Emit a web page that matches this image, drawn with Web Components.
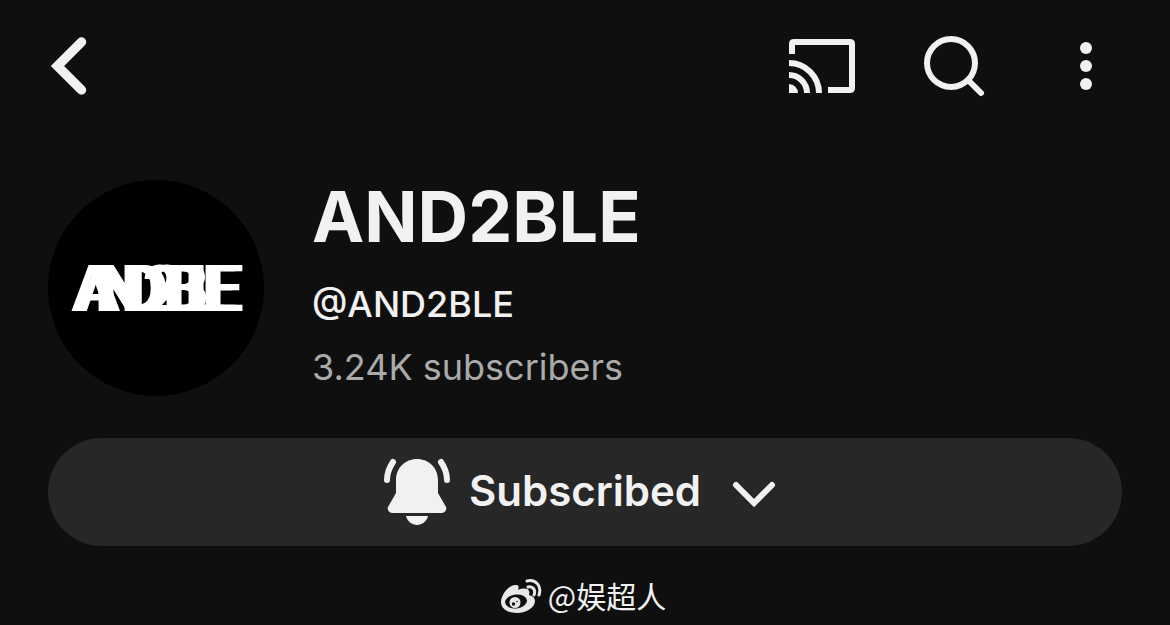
<!DOCTYPE html>
<html lang="en">
<head>
<meta charset="utf-8">
<meta name="viewport" content="width=device-width, initial-scale=1">
<title>AND2BLE</title>
<style>
  body { margin: 0; background: #0f0f0f; color: #f1f1f1; font-family: Inter, "Noto Sans CJK SC", sans-serif; }
</style>
</head>
<body>
<channel-page></channel-page>
<script>
  const define = (name, html) => {
    const template = document.createElement('template');
    template.innerHTML = html;
    customElements.define(name, class extends HTMLElement {
      constructor() {
        super();
        this.attachShadow({ mode: 'open' }).append(template.content.cloneNode(true));
      }
    });
  };

  define('icon-button', `
    <style>
      :host { display: block; }
      button { display: block; padding: 0; border: 0; background: none; color: inherit; cursor: pointer; }
    </style>
    <button type="button"><slot></slot></button>`);

  define('top-bar', `
    <style>
      :host { display: flex; justify-content: space-between; align-items: center; height: 132px; padding: 0 48px; }
      .actions { display: flex; align-items: center; gap: 60px; }
      svg { display: block; fill: none; stroke: currentColor; stroke-width: 6; }
    </style>
    <icon-button><svg role="img" aria-label="Back" width="72" height="72" viewBox="0 0 72 72"><path d="M33.500 12 9.500 36l24 24" stroke-width="9.500" stroke-linecap="round" stroke-linejoin="miter"/></svg></icon-button>
    <div class="actions">
      <icon-button><svg role="img" aria-label="Cast" width="72" height="72" viewBox="0 0 72 72"><path d="M6 24V14q0-2 2-2h56q2 0 2 2v44q0 2-2 2H42"/><path d="M3 33a30 30 0 0 1 30 30M3 45a18 18 0 0 1 18 18"/><path d="M3 54a9 9 0 0 1 9 9H3z" fill="currentColor" stroke="none"/></svg></icon-button>
      <icon-button><svg role="img" aria-label="Search" width="72" height="72" viewBox="0 0 72 72"><circle cx="33" cy="33" r="24"/><path d="m50 50 13 13" stroke-linecap="round"/></svg></icon-button>
      <icon-button><svg role="img" aria-label="More" width="72" height="72" viewBox="0 0 72 72"><g fill="currentColor" stroke="none"><circle cx="36" cy="18" r="6"/><circle cx="36" cy="36" r="6"/><circle cx="36" cy="54" r="6"/></g></svg></icon-button>
    </div>`);

  define('channel-avatar', `
    <style>
      :host { display: block; flex: none; width: 216px; height: 216px; border-radius: 50%; background: #000; overflow: hidden; }
      svg { display: block; }
      text { font: 500 64px Roboto, sans-serif; fill: #fff; }
    </style>
    <svg width="216" height="216" viewBox="0 0 216 216"><text id="mark" y="131" x="23 46 72 94 114 136 153">AND2BLE</text><use href="#mark" x="7"/></svg>`);

  define('channel-header', `
    <style>
      :host { display: flex; gap: 48px; padding: 0 48px; margin-top: 48px; }
      h1, p { margin: 0; font-size: 36px; line-height: 44px; }
      h1 { font-size: 70px; line-height: 74px; font-weight: 700; }
      .handle { margin-top: 28px; font-weight: 500; }
      .count { margin-top: 19px; color: #aaa; }
    </style>
    <channel-avatar></channel-avatar>
    <div>
      <h1><slot name="name"></slot></h1>
      <p class="handle"><slot name="handle"></slot></p>
      <p class="count"><slot name="count"></slot></p>
    </div>`);

  define('subscribe-button', `
    <style>
      :host { display: block; padding: 0 48px; margin-top: 42px; }
      button { display: flex; align-items: center; justify-content: center; gap: 16px; width: 100%; height: 108px; padding: 0; border: 0; border-radius: 54px; background: #272727; color: inherit; font: 600 42px/52px Inter, sans-serif; cursor: pointer; }
      svg { display: block; flex: none; }
      span { padding-bottom: 2px; }
    </style>
    <button type="button">
      <svg aria-hidden="true" width="72" height="72" viewBox="0 0 72 72" fill="currentColor"><path d="M36 3c-12 0-21 9-21 21v13L7 51c-1 3 1 6 4 6h50c3 0 5-3 4-6l-8-14V24C57 12 48 3 36 3z"/><path d="M25 60h22c-1 5-6 9-11 9s-10-4-11-9z"/><path d="M12 6C8 12 6 17 6 24M60 6c4 6 6 11 6 18" fill="none" stroke="currentColor" stroke-width="6" stroke-linecap="round"/></svg>
      <span><slot></slot></span>
      <svg aria-hidden="true" width="72" height="72" viewBox="0 0 72 72" fill="none" stroke="currentColor" stroke-width="6" stroke-linecap="round"><path d="m19 29 18 18 18-18"/></svg>
    </button>`);

  define('source-credit', `
    <style>
      :host { display: flex; align-items: center; justify-content: center; gap: 6px; height: 44px; margin-top: 28px; padding-right: 4px; font: 400 30px/44px "Noto Sans CJK SC", sans-serif; }
      svg { display: block; }
      span { padding-bottom: 2px; }
    </style>
    <svg aria-hidden="true" width="42" height="36" viewBox="0 0 42 36">
      <path fill="#e8e8e8" d="M17 7c2 1 2 3 1 5 5-2 10-2 11 1 1 2 0 3 0 4 4 1 6 3 6 6 0 6-8 12-18 12C8 35 1 31 1 24 1 17 9 7 15 7z"/>
      <ellipse cx="16" cy="23.500" rx="11" ry="7" fill="#0f0f0f" transform="rotate(-6 16 23)"/>
      <circle cx="15" cy="24.500" r="5.500" fill="#e8e8e8"/><circle cx="13.500" cy="26" r="1.700" fill="#0f0f0f"/><circle cx="17" cy="23.500" r="0.800" fill="#0f0f0f"/>
      <path d="M28 9c5-1 8 3 6 8M27 3c9-2 15 5 12 14" fill="none" stroke="#e8e8e8" stroke-width="3" stroke-linecap="round"/>
    </svg>
    <span><slot></slot></span>`);

  define('channel-page', `
    <style>:host { display: block; }</style>
    <top-bar></top-bar>
    <main>
      <channel-header>
        <span slot="name">AND2BLE</span>
        <span slot="handle">@AND2BLE</span>
        <span slot="count">3.24K subscribers</span>
      </channel-header>
      <subscribe-button>Subscribed</subscribe-button>
    </main>
    <source-credit lang="zh">@娱超人</source-credit>`);
</script>
</body>
</html>
